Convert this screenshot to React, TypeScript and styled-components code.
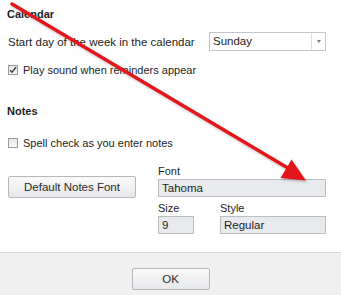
import React from 'react';
import styled, { createGlobalStyle } from 'styled-components';

const GlobalStyle = createGlobalStyle`
  html, body {
    margin: 0;
    padding: 0;
    background: #ffffff;
  }
  body {
    font-family: 'Liberation Sans', Arial, sans-serif;
    font-size: 11px;
    color: #1e1e1e;
  }
`;

const StyledPage = styled.div`
  width: 341px;
  height: 295px;
  display: flex;
  overflow: hidden;
  position: relative;
  flex-direction: column;
  background-color: #ffffff;
`;

const StyledBody = styled.div`
  height: 252px;
  display: flex;
  box-sizing: border-box;
  flex-direction: column;
  padding: 7px 15px 0 8px;
`;

const StyledHeading = styled.div<{ top: number }>`
  height: 14px;
  line-height: 14px;
  font-weight: bold;
  margin-left: -1px;
  margin-top: ${({ top }) => top}px;
`;

const StyledRow = styled.div<{ top: number }>`
  display: flex;
  align-items: center;
  justify-content: space-between;
  margin-top: ${({ top }) => top}px;
`;

const StyledLabel = styled.span`
  font-size: 11.5px;
  white-space: nowrap;
`;

const StyledSelect = styled.div`
  width: 117px;
  height: 19px;
  display: flex;
  box-sizing: border-box;
  border: 1px solid #c3c6cb;
  background-color: #ffffff;
`;

const StyledSelectValue = styled.span`
  flex: 1;
  font-size: 11.5px;
  line-height: 17px;
  padding-left: 3px;
`;

const StyledSelectButton = styled.span`
  width: 13px;
  display: flex;
  align-items: center;
  justify-content: center;
  border-left: 1px solid #dcdee2;
  &::after {
    content: '';
    border-top: 3px solid #7a7a7a;
    border-left: 2.5px solid transparent;
    border-right: 2.5px solid transparent;
  }
`;

const StyledCheckRow = styled.label<{ top: number }>`
  gap: 5px;
  height: 16px;
  display: flex;
  align-items: center;
  margin-top: ${({ top }) => top}px;
  font-size: 11px;
`;

const StyledBox = styled.span`
  width: 10px;
  height: 10px;
  display: flex;
  align-items: center;
  justify-content: center;
  box-sizing: border-box;
  border: 1px solid #9a9a9a;
  background: linear-gradient(#e6e6e6, #f8f8f8);
`;

const StyledFontArea = styled.div`
  display: flex;
  margin-top: 13px;
  align-items: flex-start;
  justify-content: space-between;
`;

const StyledButton = styled.button<{ width: number }>`
  padding: 0;
  height: 22px;
  font-size: 11.5px;
  color: #2a2a2a;
  font-family: inherit;
  border-radius: 2px;
  box-sizing: border-box;
  width: ${({ width }) => width}px;
  border: 1px solid #b5b8bd;
  background: linear-gradient(#fafafa, #e6e7e9);
`;

const StyledDefaultButton = styled(StyledButton)`
  margin-top: 12px;
`;

const StyledFields = styled.div`
  width: 168px;
  display: grid;
  row-gap: 0;
  column-gap: 26px;
  grid-template-columns: 36px 1fr;
`;

const StyledFieldLabel = styled.span<{ span?: boolean }>`
  height: 15px;
  line-height: 14px;
  font-size: 11px;
  grid-column: ${({ span }) => (span ? '1 / 3' : 'auto')};
`;

const StyledField = styled.div<{ span?: boolean }>`
  height: 18px;
  font-size: 11.5px;
  line-height: 16px;
  padding-left: 3px;
  box-sizing: border-box;
  border: 1px solid #b9bdc4;
  background-color: #e8eaee;
  margin-bottom: 4px;
  grid-column: ${({ span }) => (span ? '1 / 3' : 'auto')};
`;

const StyledFooter = styled.div`
  flex: 1;
  display: flex;
  padding-top: 15px;
  align-items: flex-start;
  justify-content: center;
  box-sizing: border-box;
  border-top: 1px solid #d6d7d9;
  background-color: #f0f0f1;
`;

const StyledArrow = styled.svg`
  top: 0;
  left: 0;
  position: absolute;
  pointer-events: none;
`;

function CheckBox({ checked }: { checked?: boolean }) {
  return (
    <StyledBox>
      {checked && (
        <svg width="8" height="8" viewBox="0 0 8 8">
          <path d="M1 4.2 L3 6.3 L7 1.2" fill="none" stroke="#3b3b3b" strokeWidth="1.4" />
        </svg>
      )}
    </StyledBox>
  );
}

export default function App() {
  return (
    <StyledPage>
      <GlobalStyle />
      <StyledBody>
        <StyledHeading top={0}>Calendar</StyledHeading>
        <StyledRow top={11}>
          <StyledLabel>Start day of the week in the calendar</StyledLabel>
          <StyledSelect>
            <StyledSelectValue>Sunday</StyledSelectValue>
            <StyledSelectButton />
          </StyledSelect>
        </StyledRow>
        <StyledCheckRow top={11}>
          <CheckBox checked />
          Play sound when reminders appear
        </StyledCheckRow>
        <StyledHeading top={26}>Notes</StyledHeading>
        <StyledCheckRow top={17}>
          <CheckBox />
          Spell check as you enter notes
        </StyledCheckRow>
        <StyledFontArea>
          <StyledDefaultButton width={128}>Default Notes Font</StyledDefaultButton>
          <StyledFields>
            <StyledFieldLabel span>Font</StyledFieldLabel>
            <StyledField span>Tahoma</StyledField>
            <StyledFieldLabel>Size</StyledFieldLabel>
            <StyledFieldLabel>Style</StyledFieldLabel>
            <StyledField>9</StyledField>
            <StyledField>Regular</StyledField>
          </StyledFields>
        </StyledFontArea>
      </StyledBody>
      <StyledFooter>
        <StyledButton width={78}>OK</StyledButton>
      </StyledFooter>
      <StyledArrow width="341" height="295" viewBox="0 0 341 295">
        <defs>
          <filter id="shade" x="-10%" y="-10%" width="120%" height="120%">
            <feDropShadow dx="1" dy="1.5" stdDeviation="1" floodColor="#000" floodOpacity="0.25" />
          </filter>
        </defs>
        <g filter="url(#shade)" fill="#e3161b">
          <line x1="12" y1="4" x2="287" y2="167.5" stroke="#e3161b" strokeWidth="3.4" strokeLinecap="round" />
          <polygon points="306,180.5 280.5,178 291.5,159.5" />
        </g>
      </StyledArrow>
    </StyledPage>
  );
}
